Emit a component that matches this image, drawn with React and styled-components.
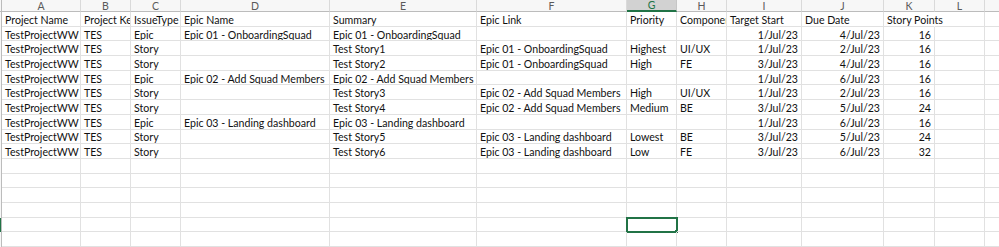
import React from "react"
import styled, { createGlobalStyle } from "styled-components"

const GlobalStyle = createGlobalStyle`
  html, body {
    margin: 0;
    padding: 0;
    background: #ffffff;
    overflow: hidden;
  }
`

const GREEN = "#217346"
const GRID = "#e1e1e1"

// widths include the right gridline of every column
const COLUMNS = [
  { key: "", width: 2 },
  { key: "A", width: 79 },
  { key: "B", width: 50 },
  { key: "C", width: 50 },
  { key: "D", width: 149 },
  { key: "E", width: 147 },
  { key: "F", width: 150 },
  { key: "G", width: 50 },
  { key: "H", width: 50 },
  { key: "I", width: 75 },
  { key: "J", width: 82 },
  { key: "K", width: 51 },
  { key: "L", width: 50 },
  { key: "M", width: 50 },
]

// dates and points are numbers, Excel puts them on the right
const NUMERIC = [8, 9, 10]

const HEADER = [
  "Project Name", "Project Key", "IssueType", "Epic Name", "Summary", "Epic Link",
  "Priority", "Component", "Target Start", "Due Date", "Story Points", "", "",
]

const DATA = [
  ["TestProjectWW", "TES", "Epic", "Epic 01 - OnboardingSquad", "Epic 01 - OnboardingSquad", "", "", "", "1/Jul/23", "4/Jul/23", "16"],
  ["TestProjectWW", "TES", "Story", "", "Test Story1", "Epic 01 - OnboardingSquad", "Highest", "UI/UX", "1/Jul/23", "2/Jul/23", "16"],
  ["TestProjectWW", "TES", "Story", "", "Test Story2", "Epic 01 - OnboardingSquad", "High", "FE", "3/Jul/23", "4/Jul/23", "16"],
  ["TestProjectWW", "TES", "Epic", "Epic 02 - Add Squad Members", "Epic 02 - Add Squad Members", "", "", "", "1/Jul/23", "6/Jul/23", "16"],
  ["TestProjectWW", "TES", "Story", "", "Test Story3", "Epic 02 - Add Squad Members", "High", "UI/UX", "1/Jul/23", "2/Jul/23", "16"],
  ["TestProjectWW", "TES", "Story", "", "Test Story4", "Epic 02 - Add Squad Members", "Medium", "BE", "3/Jul/23", "5/Jul/23", "24"],
  ["TestProjectWW", "TES", "Epic", "Epic 03 - Landing dashboard", "Epic 03 - Landing dashboard", "", "", "", "1/Jul/23", "6/Jul/23", "16"],
  ["TestProjectWW", "TES", "Story", "", "Test Story5", "Epic 03 - Landing dashboard", "Lowest", "BE", "3/Jul/23", "5/Jul/23", "24"],
  ["TestProjectWW", "TES", "Story", "", "Test Story6", "Epic 03 - Landing dashboard", "Low", "FE", "3/Jul/23", "6/Jul/23", "32"],
]

const EMPTY_ROWS = 6
const SELECTED = { row: 14, col: 7 }

const Viewport = styled.div`
  width: 999px;
  height: 247px;
  overflow: hidden;
`

const Sheet = styled.div`
  display: grid;
  grid-template-columns: ${COLUMNS.map(c => c.width + "px").join(" ")};
  grid-template-rows: 12px repeat(16, 14.7px);
  font-family: Lato, "Liberation Sans", sans-serif;
  font-size: 10.6px;
  color: #111;
`

const Corner = styled.div`
  background: #f7f7f7;
  border-right: 1px solid #bcbcbc;
  border-bottom: 1px solid #bcbcbc;
`

const ColHeader = styled.div`
  display: flex;
  align-items: center;
  justify-content: center;
  font-size: 10.5px;
  line-height: 1;
  background: ${p => (p.$active ? "#d2d2d2" : "#f7f7f7")};
  color: ${p => (p.$active ? GREEN : "#5a5a5a")};
  border-right: 1px solid ${p => (p.$active ? "#c6c6c6" : "#dadada")};
  border-bottom: ${p => (p.$active ? `2px solid ${GREEN}` : "1px solid #bcbcbc")};
  box-sizing: border-box;
  padding-top: 1px;
  overflow: hidden;
`

const RowHeader = styled.div`
  background: ${p => (p.$active ? GREEN : "#f7f7f7")};
  border-right: 1px solid #bcbcbc;
`

const Cell = styled.div`
  position: relative;
  display: flex;
  align-items: center;
  justify-content: ${p => (p.$right ? "flex-end" : "flex-start")};
  padding: 2px 3px 0 3px;
  box-sizing: border-box;
  white-space: nowrap;
  overflow: ${p => (p.$spill ? "visible" : "hidden")};
  z-index: ${p => (p.$spill ? 1 : 0)};
  border-right: 1px solid ${p => (p.$spill ? "transparent" : GRID)};
  border-bottom: 1px solid ${GRID};
  outline: ${p => (p.$selected ? `2px solid ${GREEN}` : "none")};
  outline-offset: -1px;

  ${p =>
    p.$selected &&
    `
    &::after {
      content: "";
      position: absolute;
      right: -3px;
      bottom: -3px;
      width: 5px;
      height: 5px;
      background: ${GREEN};
      border: 1px solid #fff;
      box-sizing: border-box;
      z-index: 2;
    }
  `}
`

const App = () => {
  const rows = [HEADER, ...DATA.map(r => [...r, "", ""])]
  for (let i = 0; i < EMPTY_ROWS; i++) rows.push(new Array(13).fill(""))

  return (
    <Viewport>
      <GlobalStyle />
      <Sheet>
        <Corner />
        {COLUMNS.slice(1).map((c, i) => (
          <ColHeader key={c.key} $active={i === SELECTED.col - 1}>
            {c.key}
          </ColHeader>
        ))}
        {rows.map((row, r) => (
          <React.Fragment key={r}>
            <RowHeader $active={r === SELECTED.row} />
            {row.map((value, c) => {
              // a header label runs on into an empty neighbour, as in Excel
              const spill = r === 0 && value !== "" && c < row.length - 1 && !row[c + 1]
              return (
                <Cell
                  key={c}
                  $right={NUMERIC.includes(c) && r > 0}
                  $spill={spill}
                  $selected={r === SELECTED.row && c === SELECTED.col - 1}
                >
                  {value}
                </Cell>
              )
            })}
          </React.Fragment>
        ))}
      </Sheet>
    </Viewport>
  )
}

export default App
